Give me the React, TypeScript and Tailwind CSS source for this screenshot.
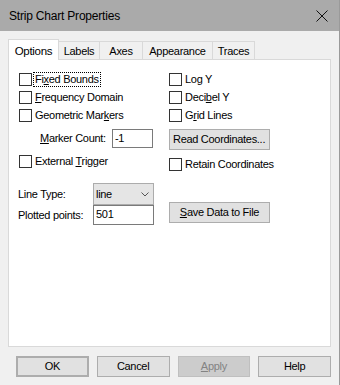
import React from "react";

const font = { fontFamily: '"Liberation Sans", Arial, sans-serif' };

function Check({ label, focus }: { label: React.ReactNode; focus?: boolean }) {
  return (
    <div className="flex h-[13px] items-center gap-[1px]">
      <div className="h-[13px] w-[13px] shrink-0 border border-[#333333] bg-white" />
      <span
        className={
          focus
            ? "border border-dotted border-black px-px leading-[13px] whitespace-nowrap"
            : "border border-transparent px-px leading-[13px] whitespace-nowrap"
        }
      >
        {label}
      </span>
    </div>
  );
}

function Btn({ children, className }: { children: React.ReactNode; className?: string }) {
  return (
    <div
      className={
        "flex items-center justify-center whitespace-nowrap border border-[#adadad] bg-[#e1e1e1] text-black " +
        (className || "")
      }
    >
      {children}
    </div>
  );
}

const tabs = ["Labels", "Axes", "Appearance", "Traces"];
const tabWidths = ["w-[42px]", "w-[44px]", "w-[71px]", "w-[43px]"];

export default function App() {
  return (
    <div
      style={font}
      className="flex h-[385px] w-[340px] flex-col border-r border-r-[#9a9a9a] bg-[#f0f0f0] text-[11px] tracking-[-0.3px] text-black"
    >
      {/* title bar */}
      <div className="flex h-[31px] shrink-0 items-center justify-between bg-[#aaaaaa] pl-[9px] pr-[10px]">
        <span className="text-[12px] tracking-[-0.2px] text-black">Strip Chart Properties</span>
        <svg width="12" height="12" viewBox="0 0 12 12" className="mr-[1px]">
          <path d="M0.5 0.5 L11.5 11.5 M11.5 0.5 L0.5 11.5" stroke="#111" strokeWidth="1" />
        </svg>
      </div>

      <div className="flex flex-1 flex-col px-[8px]">
        {/* tabs */}
        <div className="mt-[7px] flex h-[21px] items-end">
          <div className="relative z-10 -mb-px flex h-[21px] w-[51px] items-start justify-center border border-b-0 border-[#d9d9d9] bg-white pt-[3px] text-[11.5px]">
            Options
          </div>
          {tabs.map((t, i) => (
            <div
              key={t}
              className={
                "-ml-px flex h-[18px] items-center justify-center border border-b-0 border-[#d9d9d9] bg-[#f0f0f0] pt-[2px] " +
                tabWidths[i]
              }
            >
              {t}
            </div>
          ))}
        </div>

        {/* panel */}
        <div className="flex h-[288px] w-[323px] flex-col border border-[#d9d9d9] bg-white pl-[10px] pt-[13px]">
          <div className="flex">
            <div className="flex w-[150px] flex-col">
              <div className="flex flex-col gap-[5px]">
                <Check focus label={<>Fi<u>x</u>ed Bounds</>} />
                <Check label={<><u>F</u>requency Domain</>} />
                <Check label={<>Geometric Mar<u>k</u>ers</>} />
              </div>
              <div className="mt-[7px] flex h-[19px] items-center">
                <span className="ml-[21px] w-[72px]">
                  <u>M</u>arker Count:
                </span>
                <div className="flex h-[19px] w-[41px] items-center border border-[#7a7a7a] bg-white pl-[2px]">-1</div>
              </div>
              <div className="mt-[7px]">
                <Check label={<>External <u>T</u>rigger</>} />
              </div>
            </div>
            <div className="flex flex-col">
              <div className="flex flex-col gap-[5px]">
                <Check label={<>Lo<u>g</u> Y</>} />
                <Check label={<>Deci<u>b</u>el Y</>} />
                <Check label={<>G<u>r</u>id Lines</>} />
              </div>
              <Btn className="mt-[7px] h-[21px] w-[101px] justify-start pl-[3px]">Read Coordinates...</Btn>
              <div className="mt-[8px]">
                <Check label="Retain Coordinates" />
              </div>
            </div>
          </div>

          {/* line type section */}
          <div className="mt-[12px] flex">
            <div className="flex w-[150px] flex-col">
              <div className="flex h-[22px] items-center">
                <span className="-ml-px w-[75px]">Line Type:</span>
                <div className="flex h-[22px] w-[61px] items-center justify-between border border-[#acacac] bg-[#e5e5e5] pl-[2px] pr-[4px]">
                  <span>line</span>
                  <svg width="8" height="5" viewBox="0 0 8 5">
                    <polyline points="0.5,0.5 4,4 7.5,0.5" fill="none" stroke="#555" strokeWidth="1" />
                  </svg>
                </div>
              </div>
              <div className="flex h-[20px] items-center">
                <span className="-ml-px w-[75px]">Plotted points:</span>
                <div className="-mt-px flex h-[20px] w-[61px] items-center border border-[#7a7a7a] bg-white pl-[2px]">501</div>
              </div>
            </div>
            <Btn className="mt-[19px] h-[21px] w-[101px]">
              <span>
                <u>S</u>ave Data to File
              </span>
            </Btn>
          </div>
        </div>

        {/* dialog buttons */}
        <div className="mt-[9px] flex gap-[8px] pl-[8px]">
          <Btn className="h-[21px] w-[73px] border-2 border-[#0078d7]">OK</Btn>
          <Btn className="h-[21px] w-[73px]">Cancel</Btn>
          <div className="flex h-[21px] w-[73px] items-center justify-center border border-[#bfbfbf] bg-[#cccccc] text-[#838383]">
            <span>
              <u>A</u>pply
            </span>
          </div>
          <Btn className="h-[21px] w-[73px]">Help</Btn>
        </div>
      </div>
    </div>
  );
}
